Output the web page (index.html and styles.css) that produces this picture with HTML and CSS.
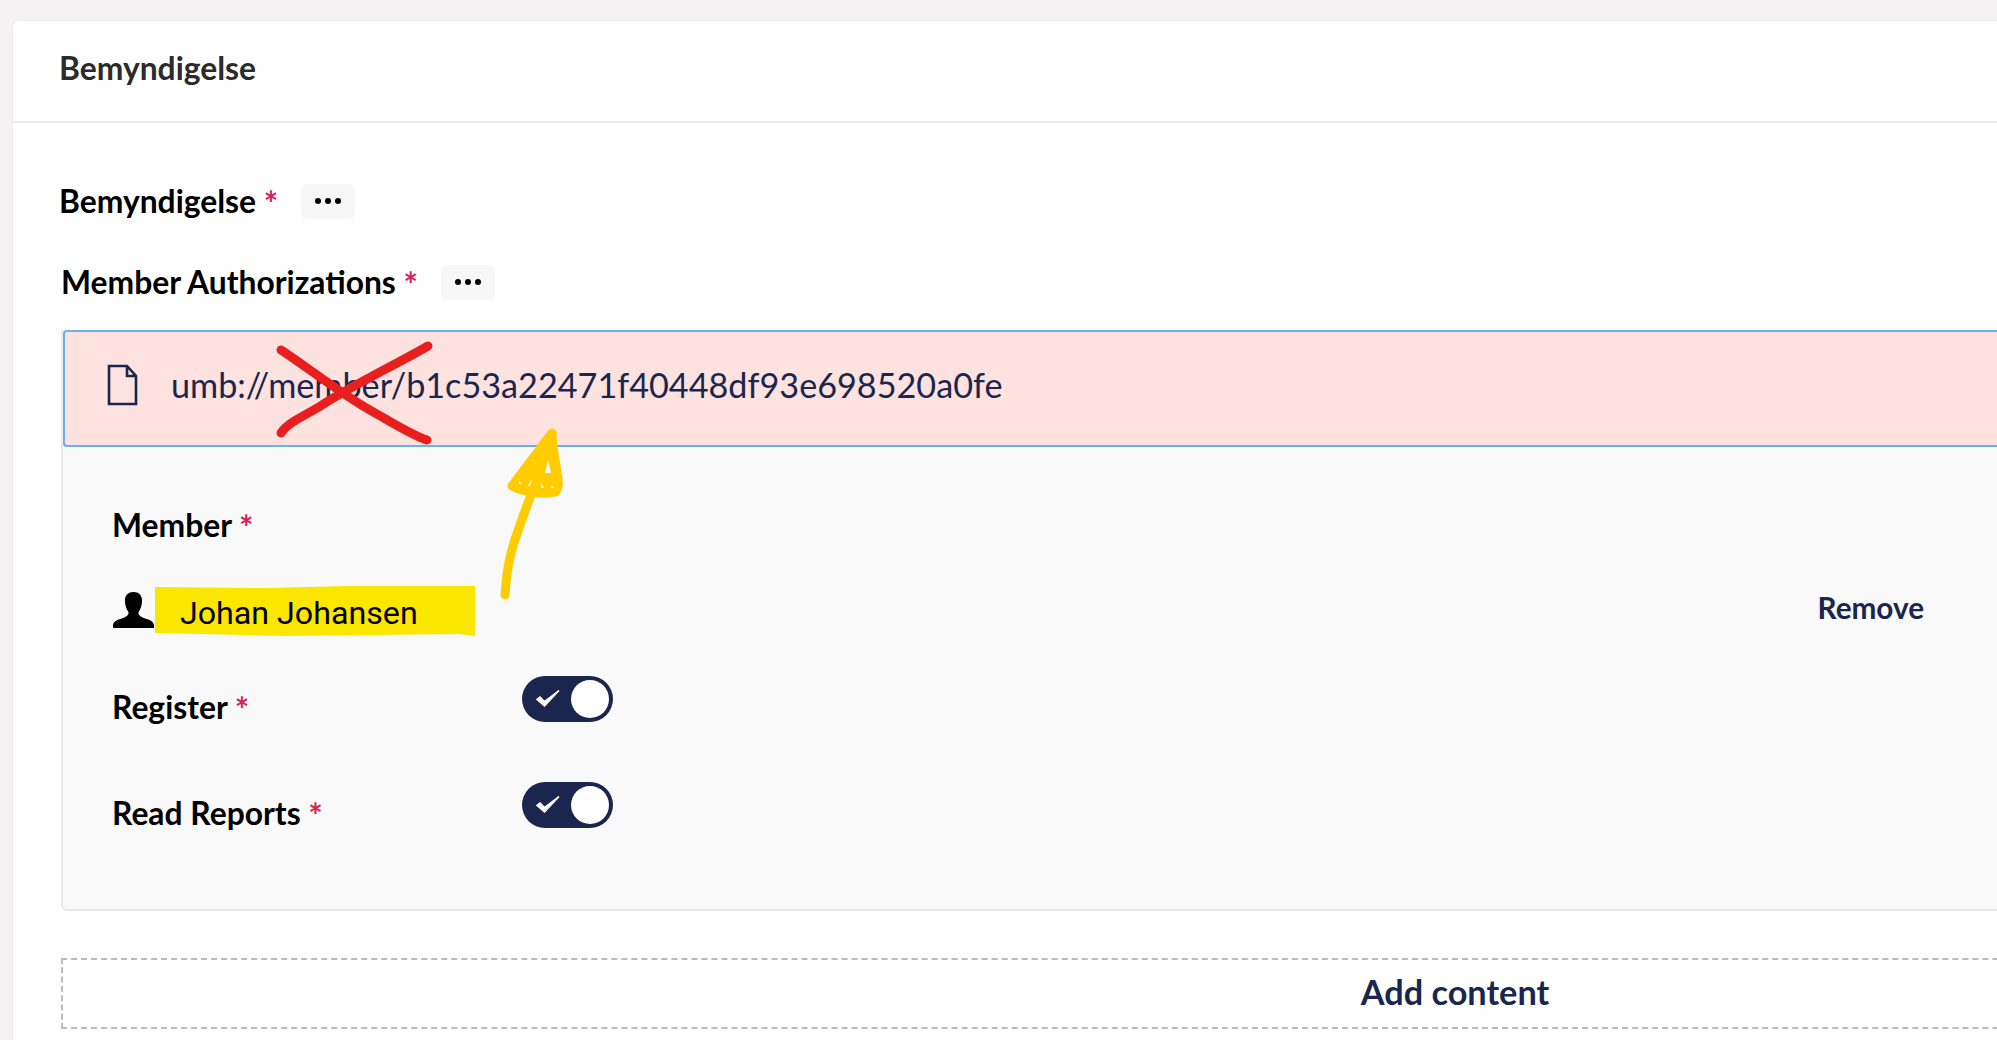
FILE: index.html
```html
<!DOCTYPE html>
<html lang="en">
<head>
    <meta charset="UTF-8">
    <meta name="viewport" content="width=device-width, initial-scale=1.0">
    <title>Bemyndigelse</title>
    <link rel="stylesheet" href="styles.css">
</head>
<body>
    <div class="card">
        <div class="card-header">Bemyndigelse</div>
        <div class="card-body">
            <div class="label-row top-label">
                <span class="label">Bemyndigelse <em>*</em></span>
                <button class="dots"><svg width="26" height="6" viewBox="0 0 26 6"><circle cx="3" cy="3" r="3"/><circle cx="13" cy="3" r="3"/><circle cx="23" cy="3" r="3"/></svg></button>
            </div>
            <div class="label-row block-label">
                <span class="label">Member Authorizations <em>*</em></span>
                <button class="dots"><svg width="26" height="6" viewBox="0 0 26 6"><circle cx="3" cy="3" r="3"/><circle cx="13" cy="3" r="3"/><circle cx="23" cy="3" r="3"/></svg></button>
            </div>

            <div class="block">
                <div class="block-bar">
                    <svg class="doc-icon" width="31" height="42" viewBox="0 0 31 42"><path d="M2 2H20L29 12V40H2Z M20 2V12H29" fill="none" stroke="#1b264f" stroke-width="2.6"/></svg>
                    <span class="block-title">umb://member/b1c53a22471f40448df93e698520a0fe</span>
                </div>
                <div class="block-content">
                    <div class="label member-label">Member <em>*</em></div>
                    <div class="member-row">
                        <svg class="person-icon" width="41" height="36" viewBox="0 0 41 36"><path d="M20.5 0C14 0 11.5 4.500 12 10C12.300 14 13.500 17.500 15.500 20C15.800 23 14 24.500 10 26C5 27.800 1 28.500 0 33V36H41V33C40 28.500 36 27.800 31 26C27 24.500 25.200 23 25.500 20C27.500 17.500 28.700 14 29 10C29.500 4.500 27 0 20.500 0Z"/></svg>
                        <span class="member-name">Johan Johansen</span>
                        <a class="remove">Remove</a>
                    </div>
                    <div class="toggle-row register-row">
                        <span class="label toggle-label">Register <em>*</em></span>
                        <div class="toggle">
                            <svg width="24" height="20" viewBox="0 0 24 20"><path d="M1 10.500L8.500 17L23 1.500L8.500 12.500L4 8Z" fill="#fff" stroke="#fff" stroke-width="1.500"/></svg>
                            <span class="knob"></span>
                        </div>
                    </div>
                    <div class="toggle-row">
                        <span class="label toggle-label">Read Reports <em>*</em></span>
                        <div class="toggle">
                            <svg width="24" height="20" viewBox="0 0 24 20"><path d="M1 10.500L8.500 17L23 1.500L8.500 12.500L4 8Z" fill="#fff" stroke="#fff" stroke-width="1.500"/></svg>
                            <span class="knob"></span>
                        </div>
                    </div>
                </div>
            </div>

            <button class="add-content">Add content</button>
        </div>
    </div>

    <!-- hand drawn marks on top of the screenshot -->
    <svg class="marks" width="1997" height="1040" viewBox="0 0 1997 1040">
        <g fill="none" stroke="#e91f1f" stroke-width="9" stroke-linecap="round" stroke-linejoin="round">
            <path d="M281 350C310 369 345 397 375 413C395 424 410 434 427 440"/>
            <path d="M428 346C395 365 355 384 322 405C305 416 288 422 281 433"/>
        </g>
        <g fill="none" stroke="#ffcc00" stroke-linecap="round" stroke-linejoin="round">
            <path d="M505 595C507 565 511 550 520 525C527 505 533 490 537 478" stroke-width="9"/>
            <path d="M552 433L515 482L512 486C522 492 545 495 555 492C558 490 559 486 558 478C555 460 552 445 552 433Z" fill="#ffcc00" stroke-width="9"/>
        </g>
        <g fill="#f9f9f9">
            <path d="M548 460L551 473H545Z"/>
            <path d="M519 481L522 484L519 484Z"/>
            <path d="M532 478L530 486L528 486Z"/>
            <path d="M541 482L544 488H541Z"/>
            <path d="M552 485L554 488H551Z"/>
        </g>
    </svg>
</body>
</html>
```

FILE: styles.css
```css
html, body {
    margin: 0;
    height: 1040px;
    overflow: hidden;
}

body {
    position: relative;
    background: #f4f2f3;
    font-family: Lato, sans-serif;
    color: #000;
}

.card {
    width: 2900px;
    height: 1019px;
    margin: 21px 0 0 13px;
    background: white;
    border-radius: 6px 0 0 0;
    box-shadow: 0 0 2px rgba(0, 0, 0, 0.08);
}

.card-header {
    height: 100px;
    box-sizing: content-box;
    padding-left: 46px;
    border-bottom: 2px solid #e9e9eb;
    font-size: 31.800px;
    font-weight: 700;
    line-height: 94px;
    color: #2b2b2b;
}

.card-body {
    padding: 0 0 0 48px;
}

.label {
    font-size: 31.800px;
    font-weight: 700;
    line-height: 40px;
}

.label em {
    font-size: 34px;
    line-height: 0;
    font-style: normal;
    font-weight: 700;
    color: #d81e5b;
    position: relative;
    top: 3px;
}

.label-row {
    display: flex;
    align-items: center;
}

.top-label {
    margin: 58px 0 0 -2px;
    height: 40px;
}

.block-label {
    margin: 41px 0 0 0;
    height: 40px;
}

.dots {
    display: flex;
    align-items: center;
    justify-content: center;
    width: 54px;
    height: 35px;
    margin-left: 23px;
    padding: 0;
    border: none;
    border-radius: 6px;
    background: #f7f7f7;
}

.block {
    margin-top: 28px;
    height: 581px;
    box-sizing: border-box;
    border: 2px solid #e9e9eb;
    border-top: none;
    border-radius: 0 0 6px 6px;
    background: #f9f9f9;
}

.block-bar {
    display: flex;
    align-items: center;
    height: 117px;
    box-sizing: border-box;
    padding: 0 0 8px 42px;
    border: 2px solid #6ab0ee;
    border-radius: 4px 0 0 4px;
    background: #fee2df;
}

.doc-icon {
    flex: none;
}

.block-title {
    margin-left: 33px;
    font-size: 34.200px;
    color: #1b264f;
}

.block-content {
    padding: 0 0 0 49px;
}

.member-label {
    margin-top: 58px;
}

.member-row {
    display: flex;
    align-items: center;
    width: 1812px;
    height: 50px;
    margin-top: 41px;
}

.person-icon {
    flex: none;
    margin: 0 0 2px 1px;
}

.member-name {
    width: 320px;
    height: 50px;
    box-sizing: border-box;
    margin-left: 1px;
    padding-left: 25px;
    background: #fbe600;
    clip-path: polygon(0 2%, 35% 4%, 60% 0, 100% 0, 100% 100%, 95% 96%, 40% 100%, 0 94%);
    font-family: Roboto, sans-serif;
    font-size: 32.200px;
    line-height: 54px;
}

.remove {
    margin: 0 0 8px auto;
    font-size: 29.700px;
    font-weight: 700;
    color: #1b264f;
}

.toggle-row {
    display: flex;
    align-items: flex-start;
    height: 46px;
    margin-top: 60px;
}

.register-row {
    margin-top: 39px;
}

.toggle-label {
    width: 410px;
    margin-top: 12px;
}

.toggle {
    display: flex;
    align-items: center;
    justify-content: space-between;
    width: 91px;
    height: 46px;
    box-sizing: border-box;
    margin-top: 1px;
    padding: 0 4px 0 14px;
    border-radius: 23px;
    background: #1b264f;
}

.knob {
    width: 38px;
    height: 38px;
    border-radius: 50%;
    background: white;
}

.add-content {
    display: block;
    width: 2788px;
    height: 71px;
    margin-top: 47px;
    padding: 0 0 4px;
    border: 2px dashed #bbb;
    background: white;
    font-family: Lato, sans-serif;
    font-size: 34.300px;
    font-weight: 700;
    color: #1b264f;
}

.marks {
    position: absolute;
    left: 0;
    top: 0;
    pointer-events: none;
}
```
